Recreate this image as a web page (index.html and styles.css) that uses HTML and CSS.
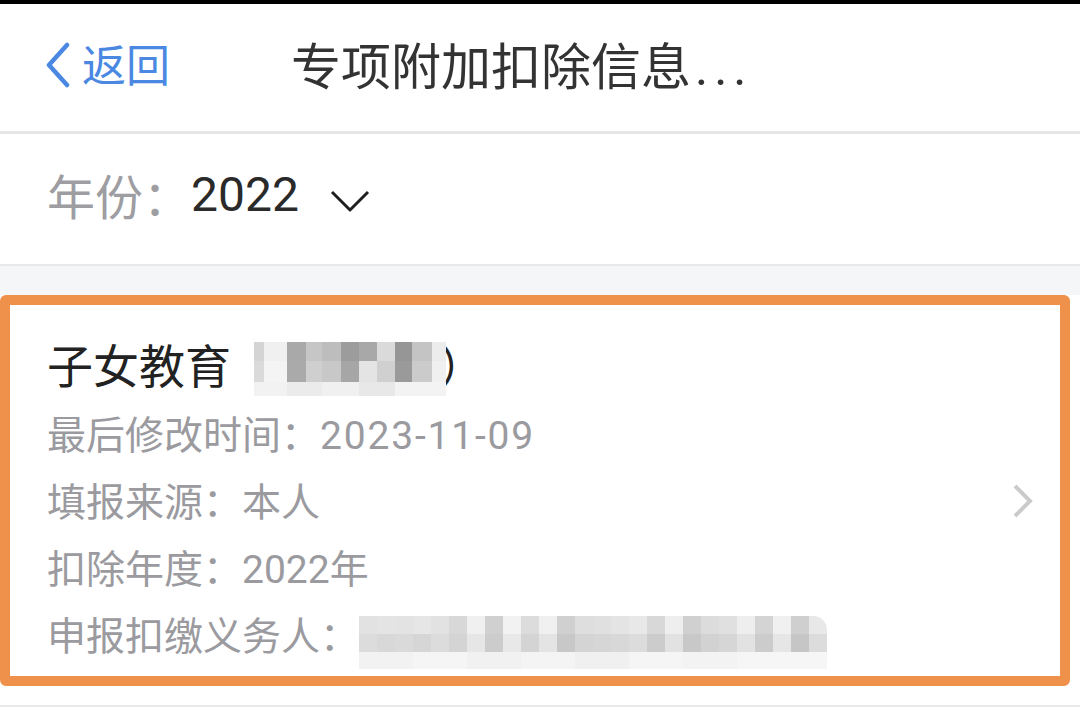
FILE: index.html
```html
<!DOCTYPE html>
<html>
<head>
  <title>专项附加扣除信息</title>
  <link rel="stylesheet" href="styles.css">
</head>
<body>
  <div class="status-bar"></div>

  <div class="nav-bar">
    <a class="back" href="#">
      <svg class="back-icon" width="28" height="46" viewBox="0 0 28 46">
        <path d="M23 3 L5 23 L23 43" fill="none" stroke="#4a88e2" stroke-width="4.5" stroke-linecap="round" stroke-linejoin="round"/>
      </svg>
      <span>返回</span>
    </a>
    <h1 class="nav-title">专项附加扣除信息<span class="dots">...</span></h1>
  </div>

  <div class="year-row">
    <span class="year-label">年份：</span>
    <span class="year-value">2022</span>
    <svg class="year-arrow" width="40" height="22" viewBox="0 0 40 22">
      <path d="M2 2 L20 20 L38 2" fill="none" stroke="#1f1f1f" stroke-width="3" stroke-linejoin="round"/>
    </svg>
  </div>

  <div class="list">
    <div class="item">
      <div class="highlight">
        <div class="item-body">
          <div class="item-title">
            子女教育<span class="paren">（</span><span class="mosaic mosaic-name">
              <span class="m-row r1"></span>
              <span class="m-row r2"></span>
              <span class="m-row r3"></span>
            </span><span class="paren-close">）</span>
          </div>
          <div class="item-line">最后修改时间：<span class="date">2023-11-09</span></div>
          <div class="item-line">填报来源：本人</div>
          <div class="item-line">扣除年度：2022年</div>
          <div class="item-line">申报扣缴义务人：<span class="mosaic mosaic-org">
              <span class="m-row r1"></span>
              <span class="m-row r2"></span>
              <span class="m-row r3"></span>
            </span></div>
        </div>
        <svg class="item-arrow" width="22" height="36" viewBox="0 0 22 36">
          <path d="M3 3 L18 18 L3 33" fill="none" stroke="#cbcbcb" stroke-width="4"/>
        </svg>
      </div>
    </div>
  </div>
</body>
</html>
```

FILE: styles.css
```css
body {
  margin: 0;
  background: #fff;
  font-family: Roboto, "Noto Sans CJK SC", sans-serif;
  width: 1080px;
  height: 713px;
  overflow: hidden;
}

.status-bar {
  height: 4px;
  background: #000;
}

/* top navigation */
.nav-bar {
  height: 117px;
  padding-bottom: 10px;
  display: flex;
  align-items: center;
  border-bottom: 3px solid #e6e6e8;
}
.back {
  display: flex;
  align-items: center;
  margin-left: 44px;
  color: #4a88e2;
  font-size: 44px;
  text-decoration: none;
  width: 247px;
}
.back-icon {
  margin-right: 10px;
  margin-top: 4px;
}
.nav-title {
  margin: 0;
  font-size: 50px;
  font-weight: normal;
  color: #333;
}
.dots {
  letter-spacing: 6px;
  margin-left: 4px;
}

/* year selector */
.year-row {
  height: 120px;
  padding: 0 0 10px 47px;
  display: flex;
  align-items: center;
  font-size: 48px;
  border-bottom: 2px solid #e8e8ea;
}
.year-label {
  color: #9d9da2;
}
.year-value {
  color: #2a2a2a;
}
.year-arrow {
  margin-left: 31px;
  margin-top: 14px;
}

/* list */
.list {
  background: #f5f6f8;
  padding-top: 29px;
}
.item {
  background: #fff;
  padding: 0 10px 19px 0;
  border-bottom: 2px solid #e8e8ea;
}
.highlight {
  border: 10px solid #f0914b;
  border-radius: 6px;
  display: flex;
  align-items: center;
  padding: 32px 26px 5px 37px;
}
.item-body {
  flex: 1;
}
.item-arrow {
  margin-top: -6px;
}
.item-title {
  font-size: 46px;
  line-height: 60px;
  color: #222;
  margin-bottom: 5px;
  white-space: nowrap;
}
.paren {
  margin-right: -23px;
}
.paren-close {
  margin-left: -7px;
}
.item-line {
  font-size: 39px;
  line-height: 67px;
  color: #9a9a9f;
  white-space: nowrap;
}
.date {
  letter-spacing: 1.8px;
}

/* pixelated privacy blur */
.mosaic {
  display: inline-flex;
  flex-direction: column;
  vertical-align: middle;
  position: relative;
}
.m-row {
  display: block;
}
.mosaic-name {
  width: 192px;
  top: -2px;
}
.mosaic-name .r1 {
  height: 19px;
  background: linear-gradient(to right,
    #d4d4d4 0 10px, #f0f0f0 10px 33px, #a9a9a9 33px 52px, #c6c6c6 52px 68px,
    #bdbdbd 68px 87px, #9c9c9c 87px 105px, #a8a8a8 105px 123px, #dadada 123px 141px,
    #969696 141px 158px, #c4c4c4 158px 178px, #ececec 178px 192px);
}
.mosaic-name .r2 {
  height: 21px;
  background: linear-gradient(to right,
    #dadada 0 10px, #f4f4f4 10px 33px, #aaaaaa 33px 52px, #cfcfcf 52px 68px,
    #c8c8c8 68px 87px, #a6a6a6 87px 105px, #e4e4e4 105px 123px, #d0d0d0 123px 141px,
    #9a9a9a 141px 158px, #cbcbcb 158px 178px, #f0f0f0 178px 192px);
}
.mosaic-name .r3 {
  height: 14px;
  background: linear-gradient(to right,
    #f2f2f2 0 33px, #ebebeb 33px 68px, #f0f0f0 68px 105px, #e8e8e8 105px 141px, #f3f3f3 141px 192px);
}
.mosaic-org {
  width: 468px;
  top: 3px;
  border-top-right-radius: 14px;
  overflow: hidden;
}
.mosaic-org .r1 {
  height: 18px;
  background: linear-gradient(to right,
    #e2e2e2 0 18px, #e4e4e4 18px 36px, #e3e3e3 36px 54px, #e6e6e6 54px 72px,
    #e2e2e2 72px 90px, #d8d8d8 90px 108px, #f0f0f0 108px 126px, #d0d0d0 126px 144px,
    #f2f2f2 144px 162px, #dcdcdc 162px 180px, #f0f0f0 180px 198px, #d0d0d0 198px 216px,
    #dedede 216px 234px, #e0e0e0 234px 252px, #e4e4e4 252px 270px, #e8e8e8 270px 288px,
    #d8d8d8 288px 306px, #eeeeee 306px 324px, #d0d0d0 324px 342px, #dcdcdc 342px 360px,
    #e0e0e0 360px 378px, #eeeeee 378px 396px, #d4d4d4 396px 414px, #f0f0f0 414px 432px,
    #cfcfcf 432px 450px, #e8e8e8 450px 468px);
}
.mosaic-org .r2 {
  height: 18px;
  background: linear-gradient(to right,
    #dcdcdc 0 18px, #d8d8d8 18px 36px, #dadada 36px 54px, #d6d6d6 54px 72px,
    #dcdcdc 72px 90px, #d4d4d4 90px 108px, #e6e6e6 108px 126px, #cccccc 126px 144px,
    #e8e8e8 144px 162px, #d4d4d4 162px 180px, #e4e4e4 180px 198px, #c8c8c8 198px 216px,
    #d4d4d4 216px 234px, #d6d6d6 234px 252px, #d8d8d8 252px 270px, #dcdcdc 270px 288px,
    #cccccc 288px 306px, #e2e2e2 306px 324px, #c8c8c8 324px 342px, #d2d2d2 342px 360px,
    #d6d6d6 360px 378px, #e2e2e2 378px 396px, #cccccc 396px 414px, #e6e6e6 414px 432px,
    #c6c6c6 432px 450px, #dcdcdc 450px 468px);
}
.mosaic-org .r3 {
  height: 17px;
  background: linear-gradient(to right,
    #f2f2f2 0 54px, #f5f5f5 54px 108px, #f1f1f1 108px 162px, #f4f4f4 162px 216px,
    #f0f0f0 216px 270px, #f5f5f5 270px 324px, #f3f3f3 324px 378px, #f6f6f6 378px 468px);
}
```
